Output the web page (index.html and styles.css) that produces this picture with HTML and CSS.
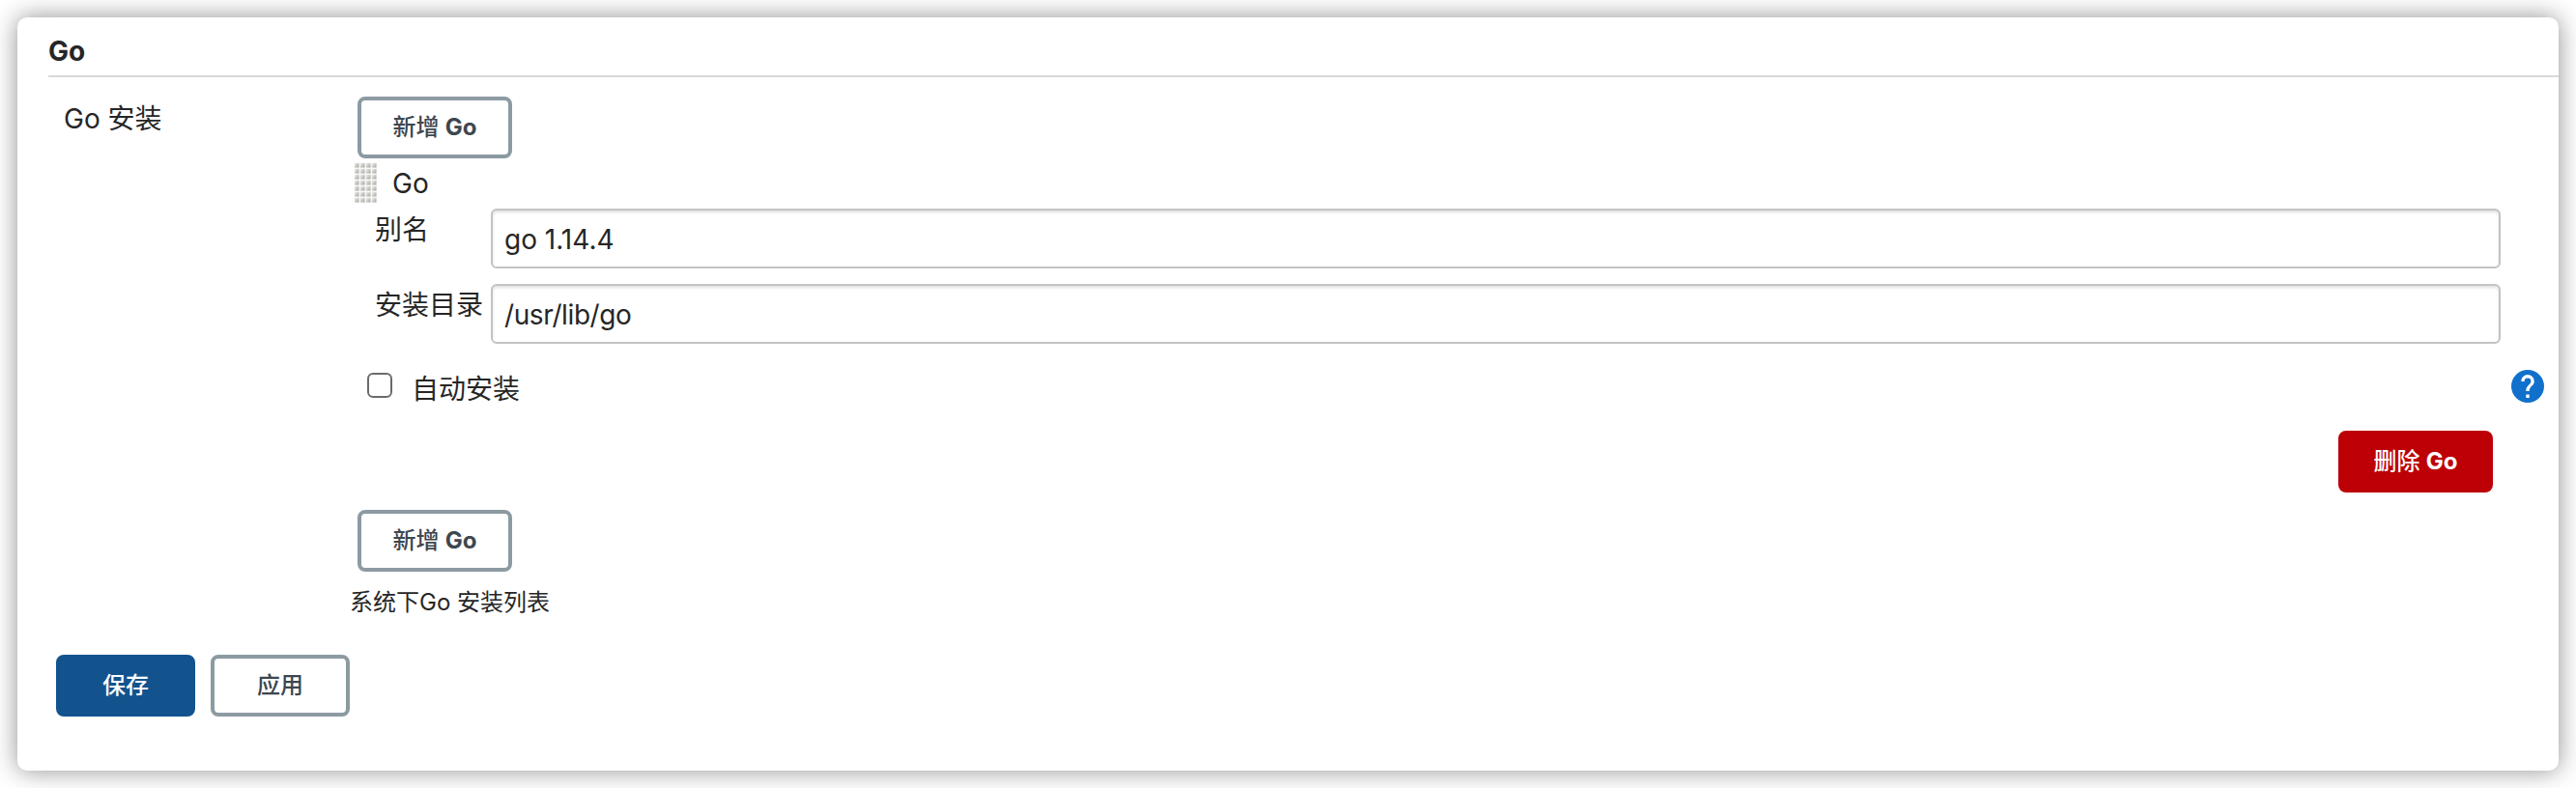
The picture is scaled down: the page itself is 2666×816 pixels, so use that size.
FILE: index.html
```html
<!DOCTYPE html>
<html lang="zh-CN">
<head>
<meta charset="utf-8">
<title>Go</title>
<link rel="stylesheet" href="styles.css">
</head>
<body>
<main class="card">
  <h2 class="section-title">Go</h2>
  <div class="setting">
    <div class="setting-name">Go 安装</div>
    <div class="setting-body">
      <button class="btn btn-add">新增 <b>Go</b></button>
      <div class="item-head">
        <svg class="grip" width="23" height="42" viewBox="0 0 23 42">
          <defs>
            <linearGradient id="dot" x1="0" y1="0" x2="1" y2="1">
              <stop offset="0" stop-color="#f0f0ee"/>
              <stop offset="1" stop-color="#a2a29e"/>
            </linearGradient>
            <pattern id="dots" width="6" height="6" patternUnits="userSpaceOnUse">
              <rect width="6" height="6" fill="#f7f7f5"/>
              <rect y="1" width="4.5" height="4.5" fill="url(#dot)"/>
            </pattern>
          </defs>
          <rect width="23" height="42" fill="url(#dots)"/>
        </svg>
        <span>Go</span>
      </div>
      <div class="field">
        <label for="name">别名</label>
        <input id="name" type="text" value="go 1.14.4">
      </div>
      <div class="field">
        <label for="home">安装目录</label>
        <input id="home" class="path" type="text" value="/usr/lib/go">
      </div>
      <div class="auto">
        <input id="auto" class="check" type="checkbox">
        <label for="auto">自动安装</label>
        <svg class="help" width="34" height="34" viewBox="0 0 24 24"><path fill="#1070cc" fill-rule="evenodd" d="M12 0a12 12 0 1 0 0 24a12 12 0 1 0 0-24zM13.2 20.4h-2.4V18h2.4zM15.7 11.1l-1.1 1.1c-.9.9-1.4 1.6-1.4 3.4h-2.4V15c0-1.3.5-2.5 1.4-3.4l1.5-1.5c.4-.4.7-1 .7-1.7a2.4 2.4 0 0 0-4.8 0H7.2a4.8 4.8 0 0 1 9.6 0c0 1-.4 2-1.1 2.7z"/></svg>
      </div>
      <div class="remove"><button class="btn btn-danger">删除 <b>Go</b></button></div>
      <button class="btn btn-add">新增 <b>Go</b></button>
      <div class="description">系统下Go 安装列表</div>
    </div>
  </div>
  <div class="actions">
    <button class="btn btn-primary">保存</button>
    <button class="btn">应用</button>
  </div>
</main>
</body>
</html>
```
FILE: styles.css
```css
* { box-sizing: border-box; }
body {
  margin: 0;
  padding: 18px;
  height: 816px;
  overflow: hidden;
  background: #fff;
  color: #262626;
  font: 28px/40px Inter, "Noto Sans CJK SC", sans-serif;
}
.card {
  height: 780px;
  padding-left: 32px;
  border-radius: 10px;
  background: #fff;
  box-shadow: 0 0 26px rgba(0, 0, 0, .44);
}
.section-title {
  margin: 0;
  height: 62px;
  padding-top: 15px;
  border-bottom: 2px solid #d9d9d9;
  font-size: 28px;
  line-height: 40px;
  font-weight: 700;
}
.setting { display: flex; padding-top: 20px; }
.setting-name { width: 312px; padding: 3px 0 0 16px; }
.setting-body { flex: 1; }
.btn {
  display: block;
  width: 144px;
  height: 64px;
  padding: 0;
  border: 4px solid #8c9aa2;
  border-radius: 8px;
  background: #fff;
  color: #3e464f;
  font: 500 24px/34px Inter, "Noto Sans CJK SC", sans-serif;
}
.btn b { font-weight: 700; }
.btn-add, .btn-danger { width: 160px; }
.btn-add { margin-left: 8px; }
.btn-primary { border-color: #12538e; background: #12538e; color: #fff; }
.btn-danger { border-color: #bd0006; background: #bd0006; color: #fff; }
.item-head { display: flex; gap: 16px; height: 52px; padding: 4px 0 0 5px; }
.item-head span { padding-top: 2px; }
.field { display: flex; height: 78px; padding-right: 60px; }
.field label { width: 146px; padding: 2px 0 0 26px; white-space: nowrap; }
.field input {
  flex: 1;
  height: 62px;
  padding: 2px 12px 0;
  border: 2px solid #c3c3c3;
  border-radius: 6px;
  box-shadow: inset 0 2px 3px rgba(0, 0, 0, .12);
  color: #262626;
  font: inherit;
}
.field .path { letter-spacing: -.4px; }
.auto { display: flex; align-items: flex-start; height: 74px; padding: 11px 15px 0 18px; }
.check {
  appearance: none;
  width: 26px;
  height: 26px;
  margin: 3px 20px 0 0;
  border: 2px solid #6b6b6b;
  border-radius: 6px;
  background: #fff;
}
.help { margin-left: auto; }
.remove { display: flex; justify-content: flex-end; height: 82px; padding-right: 68px; }
.description { padding-top: 12px; font-size: 24px; }
.actions { display: flex; gap: 16px; padding: 34px 0 0 8px; }
```
